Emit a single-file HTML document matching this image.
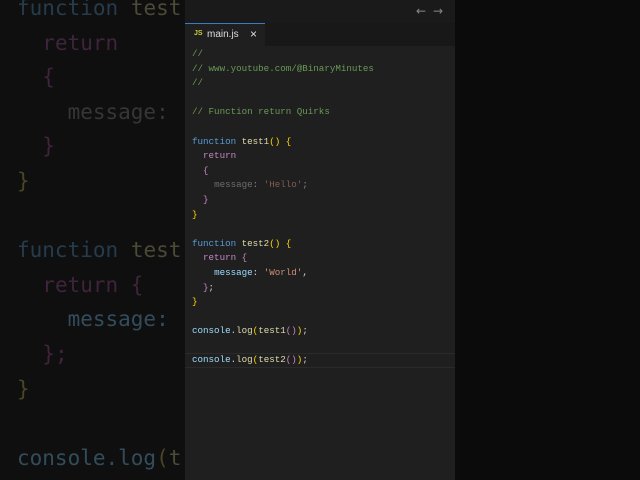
<!DOCTYPE html>
<html><head><meta charset="utf-8"><style>
*{margin:0;padding:0;box-sizing:border-box}
html,body{width:640px;height:480px;overflow:hidden}
body{background:#0b0b0b;position:relative;font-family:"Liberation Mono",monospace}
#left{position:absolute;left:0;top:0;width:185px;height:480px;background:#0f0f0f;overflow:hidden}
#left pre{position:absolute;left:17px;top:-9px;font-size:21px;line-height:34.6px;color:#4a4a4a;white-space:pre}
#mid{position:absolute;left:185px;top:0;width:270px;height:480px;background:#1f1f1f;overflow:hidden}
#bar{position:absolute;left:0;top:0;width:270px;height:23px;background:#1a1a1a}
#tabs{position:absolute;left:0;top:23px;width:270px;height:23px;background:#181818}
#tab{position:absolute;left:0;top:0;width:80px;height:23px;background:#1f1f1f;border-top:1px solid #3b7bc4;font-family:"Liberation Sans",sans-serif;font-size:10px;color:#ddd}
#code{position:absolute;left:7px;top:47px;font-size:9.2px;line-height:14.6px;white-space:pre;color:#ccc}
.c{color:#6a9955}.k{color:#569cd6}.f{color:#dcdcaa}.y{color:#ffd700}.r{color:#c586c0}.p{color:#9cdcfe}.s{color:#ce9178}.w{color:#d4d4d4}
.dim{opacity:.55}
#hl{position:absolute;left:0;top:353px;width:270px;height:15px;border-top:1px solid #2a2a2a;border-bottom:1px solid #2a2a2a}
</style></head><body>
<div id="left"><pre><span style="color:#263c4d">function</span> <span style="color:#4a4a36">test</span>
  <span style="color:#3f243b">return</span>
  <span style="color:#3f243b">{</span>
    <span style="color:#363636">message:</span>
  <span style="color:#3f243b">}</span>
<span style="color:#4a4524">}</span>

<span style="color:#263c4d">function</span> <span style="color:#4a4a36">test</span>
  <span style="color:#3f243b">return {</span>
    <span style="color:#334c5c">message:</span>
  <span style="color:#3f243b">};</span>
<span style="color:#4a4524">}</span>

<span style="color:#334c5c">console.log</span><span style="color:#4a4524">(</span><span style="color:#4a4a36">t</span></pre></div>
<div id="mid">
<div id="bar"><span style="position:absolute;left:231px;top:4px;color:#888;font-size:12px;font-family:'DejaVu Sans',sans-serif">←</span><span style="position:absolute;left:248px;top:4px;color:#888;font-size:12px;font-family:'DejaVu Sans',sans-serif">→</span></div>
<div id="tabs"><div id="tab"><span style="position:absolute;left:9px;top:6px;font-size:7px;font-weight:bold;color:#cbcb41">JS</span><span style="position:absolute;left:22px;top:5px">main.js</span><span style="position:absolute;left:65px;top:3px;font-size:12px">×</span></div></div>
<div id="hl"></div>
<div id="code"><span class="c">//
// www.youtube.com/@BinaryMinutes
//

// Function return Quirks</span>

<span class="k">function</span> <span class="f">test1</span><span class="y">() {</span>
  <span class="r">return</span>
  <span class="r">{</span>
    <span class="dim"><span style="color:#aaa">message</span><span class="w">:</span> <span class="s">'Hello'</span><span class="w">;</span></span>
  <span class="r">}</span>
<span class="y">}</span>

<span class="k">function</span> <span class="f">test2</span><span class="y">() {</span>
  <span class="r">return {</span>
    <span class="p">message</span><span class="w">:</span> <span class="s">'World'</span><span class="w">,</span>
  <span class="r">}</span><span class="w">;</span>
<span class="y">}</span>

<span class="p">console</span><span class="w">.</span><span class="f">log</span><span class="y">(</span><span class="f">test1</span><span class="r">()</span><span class="y">)</span><span class="w">;</span>

<span class="p">console</span><span class="w">.</span><span class="f">log</span><span class="y">(</span><span class="f">test2</span><span class="r">()</span><span class="y">)</span><span class="w">;</span></div>
</div>
</body></html>
